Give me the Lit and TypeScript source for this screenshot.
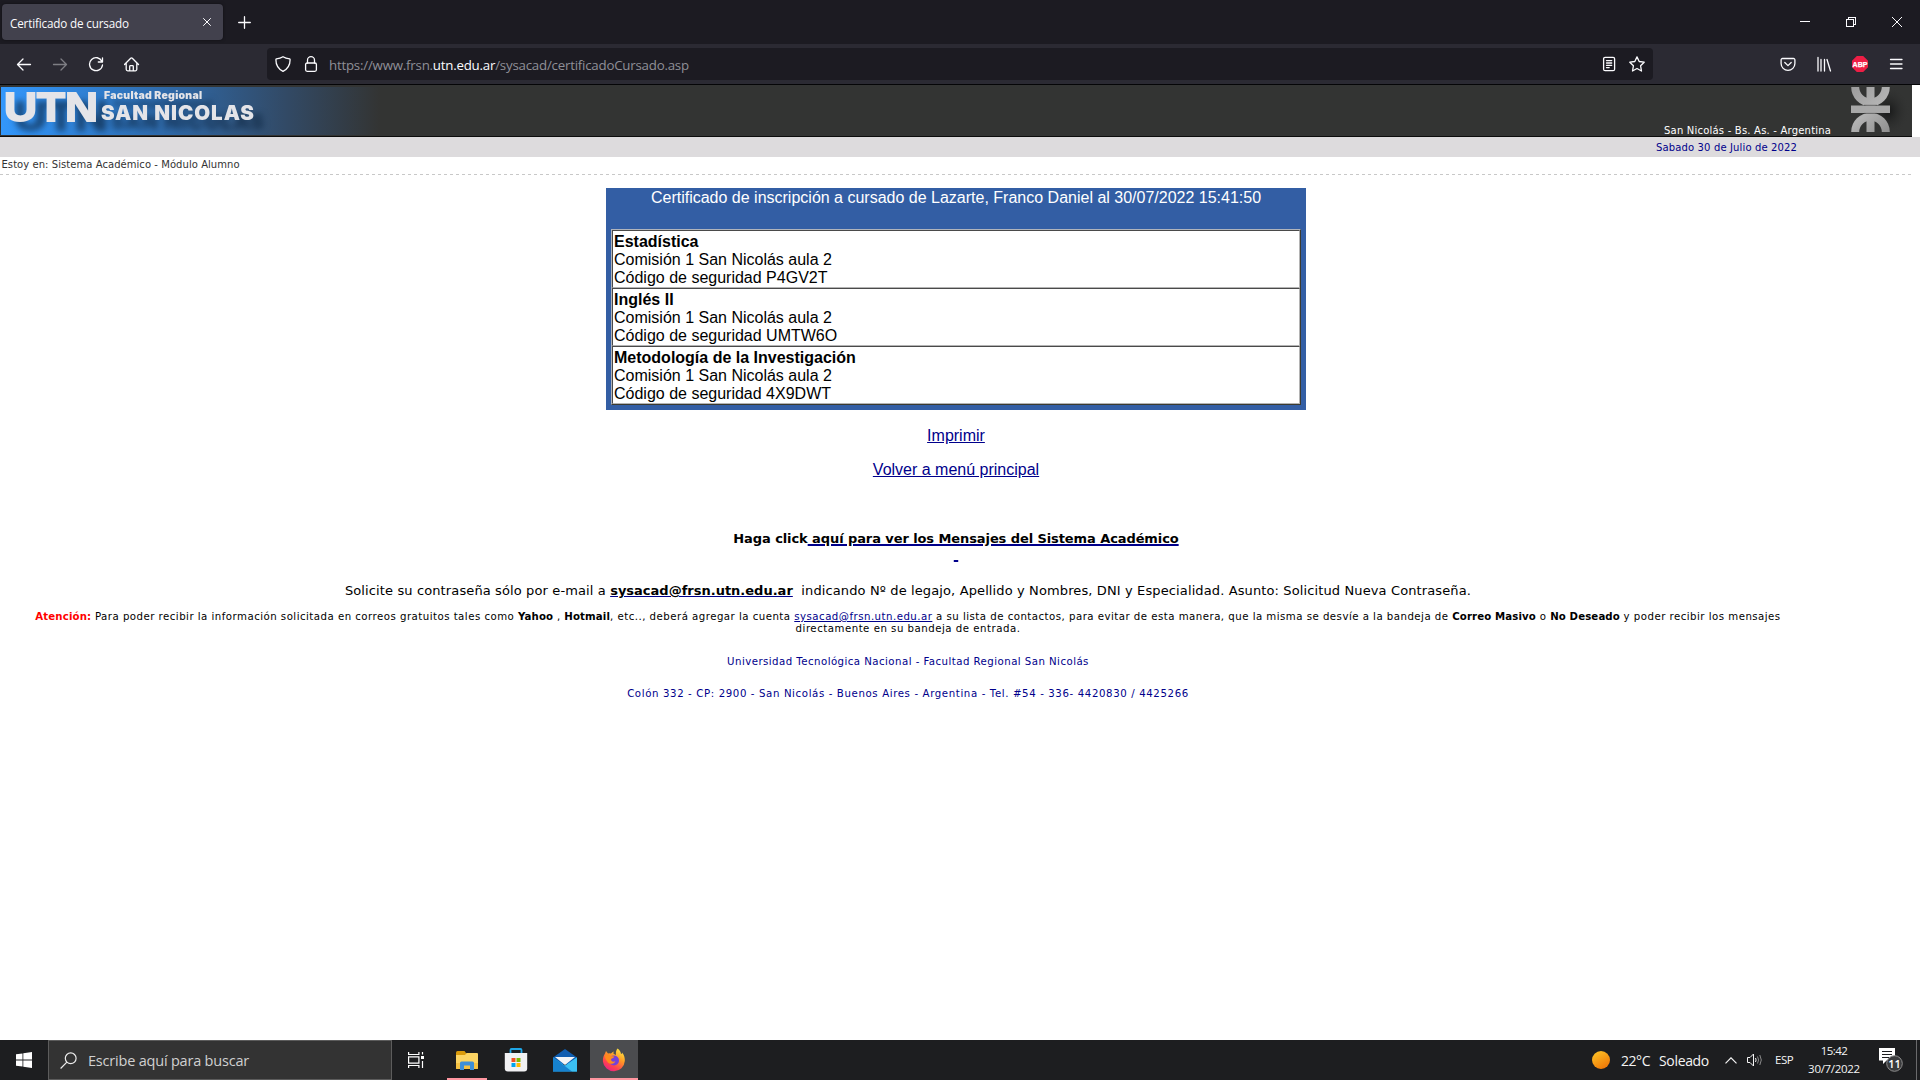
import { LitElement, html, css } from "lit";
import { customElement } from "lit/decorators.js";

const subjects = [
  { name: "Estadística", code: "P4GV2T" },
  { name: "Inglés II", code: "UMTW6O" },
  { name: "Metodología de la Investigación", code: "4X9DWT" },
];

@customElement("browser-chrome")
class BrowserChrome extends LitElement {
  static styles = css`
    :host { display: block; font-family: "Open Sans", "Noto Sans", sans-serif; color: #fbfbfe; }
    svg { display: block; flex: none; fill: none; stroke: #fbfbfe; stroke-width: 1.3; stroke-linecap: round; stroke-linejoin: round; }
    .tabs { height: 44px; background: #1c1b22; display: flex; align-items: center; padding-left: 2px; box-sizing: border-box; }
    .tab { width: 221px; height: 36px; background: #42414d; border-radius: 4px; display: flex; align-items: center; justify-content: space-between; padding: 0 12px 0 8px; box-sizing: border-box; box-shadow: 0 0 3px rgba(0,0,0,.5); }
    .title { font-size: 11.7px; letter-spacing: -.17px; line-height: 18px; white-space: nowrap; padding-top: 1px; }
    .plus { margin-left: 15px; }
    .win { margin-left: auto; display: flex; gap: 36px; padding-right: 18px; }
    .win svg { stroke-width: 1; shape-rendering: crispEdges; }
    .win .smooth { shape-rendering: auto; }
    .nav { height: 41px; background: #2b2a33; border-bottom: 1px solid #050507; display: flex; align-items: center; box-sizing: border-box; padding-left: 16px; }
    .buttons { display: flex; gap: 20px; width: 251px; }
    .dim { opacity: .4; }
    .field { width: 1386px; height: 32px; border-radius: 4px; background: #1c1b22; display: flex; align-items: center; padding: 0 8px; box-sizing: border-box; gap: 12px; }
    .url { font-size: 13.3px; letter-spacing: -.225px; line-height: 20px; color: #8f8f97; margin-left: -2px; white-space: nowrap; flex: 1; padding-top: 2px; }
    .url b { font-weight: 400; color: #fbfbfe; }
    .ext { margin-left: auto; display: flex; gap: 20px; padding-right: 16px; }
    .abp { fill: #fff; stroke: #fff; stroke-width: .25; font: 700 7px "Liberation Sans", sans-serif; }
  `;
  render() {
    return html`
      <div class="tabs">
        <div class="tab"><span class="title">Certificado de cursado</span>
          <svg width="8" height="8" viewBox="0 0 8 8"><path stroke-width="1" d="M.5.5l7 7M7.5.5l-7 7"/></svg></div>
        <svg class="plus" width="13" height="13" viewBox="0 0 13 13"><path d="M6.5.7v11.6M.7 6.5h11.6"/></svg>
        <div class="win">
          <svg width="10" height="10" viewBox="0 0 10 10"><path d="M0 4.5h10"/></svg>
          <svg width="10" height="10" viewBox="0 0 10 10"><path d="M.5 2.5h7v7h-7zM2.5 2.5v-2h7v7h-2"/></svg>
          <svg class="smooth" width="10" height="10" viewBox="0 0 10 10"><path d="M.2.2l9.6 9.6M9.8.2L.2 9.8"/></svg>
        </div>
      </div>
      <div class="nav">
        <div class="buttons">
          <svg width="16" height="16" viewBox="0 0 16 16"><path d="M14.5 8.5H1.5M7 3L1.5 8.5 7 14"/></svg>
          <svg class="dim" width="16" height="16" viewBox="0 0 16 16"><path d="M1.5 8.5h13M9 3l5.5 5.500L9 14"/></svg>
          <svg width="16" height="16" viewBox="0 0 16 16"><path d="M14 5.500A6.500 6.500 0 1 0 14.500 9M14.500 1.800v4.200h-4.200"/></svg>
          <svg width="16" height="16" viewBox="0 0 16 16"><path d="M.5 8.500L6.700 2.200a1.100 1.100 0 0 1 1.600 0L14.500 8.500M2.200 7v6.300a1.500 1.500 0 0 0 1.500 1.500h7.600a1.500 1.500 0 0 0 1.500-1.500V7M5.700 14.500V10.500a.8.800 0 0 1 .8-.8h2a.8.800 0 0 1 .8.800v4"/></svg>
        </div>
        <div class="field">
          <svg width="16" height="16" viewBox="0 0 16 16"><path d="M8 .7C6 2 3.500 2.600 1.400 2.800 1 3 .9 3.300 .9 3.700 .9 9 3 12.800 8 15.300c5-2.500 7.100-6.300 7.100-11.600 0-.4-.1-.7-.5-.9C12.500 2.600 10 2 8 .7z"/></svg>
          <svg width="16" height="16" viewBox="0 0 16 16"><rect x="2.600" y="7" width="10.800" height="8.300" rx="1.500"/><path d="M4.500 7V4.200a3.500 3.500 0 0 1 7 0V7"/></svg>
          <span class="url">https://www.frsn.<b>utn.edu.ar</b>/sysacad/certificadoCursado.asp</span>
          <svg width="16" height="16" viewBox="0 0 16 16"><rect x="2.600" y="1.300" width="11" height="13.400" rx="1.500"/><path d="M5.500 4.600h5.200M5.500 7h5.200M5.500 9.300h5.200M5.500 11.600h2.700"/></svg>
          <svg width="16" height="16" viewBox="0 0 16 16"><path d="M8 .9l2.200 4.600 5 .7-3.600 3.600.9 5.200L8 12.500l-4.500 2.500.9-5.200L.8 6.200l5-.7z"/></svg>
        </div>
        <div class="ext">
          <svg width="16" height="16" viewBox="0 0 16 16"><path d="M2.500 2.500h11a1.400 1.400 0 0 1 1.400 1.400v3.600a6.900 6.900 0 0 1-13.800 0V3.900a1.400 1.400 0 0 1 1.400-1.400zM4.800 6.500L8 9.600l3.200-3.100"/></svg>
          <svg width="16" height="16" viewBox="0 0 16 16"><path d="M2 1.500v13.500M5 3.500v11.500M8.500 3.500v11.500M11 3.500l3.500 11.500"/></svg>
          <svg width="16" height="16" viewBox="0 0 16 16"><path stroke="none" fill="#ed1e45" d="M4.800 0h6.400L16 4.800v6.400L11.200 16H4.800L0 11.200V4.800z"/><text class="abp" x="8" y="10.600" text-anchor="middle">ABP</text></svg>
          <svg width="16" height="16" viewBox="0 0 16 16"><path d="M2.500 3.500h11.500M2.500 8h11.500M2.500 12.500h11.500"/></svg>
        </div>
      </div>`;
  }
}

@customElement("campus-page")
class CampusPage extends LitElement {
  static styles = css`
    :host { display: block; height: 955px; background: #fff; font-family: "DejaVu Sans", sans-serif; color: #000; overflow: hidden; }
    .header { width: 1912px; height: 52px; box-sizing: border-box; background: #333433; border-bottom: 1px solid #0c0c0c; display: flex; }
    .logo { display: block; width: 380px; height: 51px; }
    .letters { filter: drop-shadow(10px 9px 3px rgba(12, 36, 62, .65)); }
    .place { margin-left: auto; align-self: flex-end; color: #fff; font-size: 10px; letter-spacing: .206px; line-height: 11px; white-space: nowrap; width: 167px; }
    .emblem { display: block; margin: 0 0 0 12px; }
    .date { height: 20px; box-sizing: border-box; background: #dddbdd; color: #00008b; font-size: 10px; letter-spacing: .14px; line-height: 20px; padding: 1px 0 0 1656px; white-space: nowrap; }
    .crumb { font-size: 10px; letter-spacing: .056px; line-height: 15px; height: 17px; padding-left: 1.500px; color: #333; }
    .dash { width: 1912px; height: 1px; background: repeating-linear-gradient(90deg, #c8c8c8 0 3px, transparent 3px 6px); }
    .card { width: 700px; height: 222px; box-sizing: border-box; margin: 13px 0 0 606px; background: #335ea4; padding: 0 5px; font: 16px/18px "Liberation Sans", Arial, sans-serif; }
    .cardtitle { height: 41px; box-sizing: border-box; padding-top: 1px; color: #fff; text-align: center; }
    .list { border: 1px solid; border-color: #b0b4bc #3b3a30 #3b3a30 #b0b4bc; }
    .item { border: 1px solid; border-color: #4a4a4a #b4b4b4 #b4b4b4 #4a4a4a; padding: 2px 1px 0; background: #fff; }
    .links { width: 1912px; display: flex; flex-direction: column; align-items: center; gap: 16px; padding-top: 17px; font: 16px/18px "Liberation Sans", Arial, sans-serif; }
    a { color: #00008b; text-decoration: underline; }
    .msg { width: 1912px; text-align: center; font-size: 13px; letter-spacing: -.09px; font-weight: 700; line-height: 17px; padding-top: 51px; }
    .gap { margin-top: -1px; }
    .msg u { text-decoration-color: #00008b; text-decoration-thickness: 2px; }
    .foot { width: 1816px; text-align: center; font-size: 10.2px; line-height: 12px; white-space: nowrap; }
    .ask { font-size: 13px; letter-spacing: .12px; line-height: 16px; padding: 20px 0 12px; }
    .ask u { text-decoration-color: #00008b; font-weight: 700; letter-spacing: 0; }
    .notice { letter-spacing: .475px; }
    .notice b { letter-spacing: .12px; }
    .notice2 { letter-spacing: .5px; }
    .red { color: #f00; }
    .org { color: #00008b; display: flex; flex-direction: column; gap: 20px; padding-top: 21px; }
    .uni { letter-spacing: .454px; }
    .addr { letter-spacing: .616px; }
    .heavy { font-family: "Inter", "Liberation Sans", sans-serif; font-weight: 900; }
    .utn { font-family: "Liberation Sans", sans-serif; font-weight: 700; }
  `;
  render() {
    return html`
      <div class="header">
        <svg class="logo" viewBox="0 85 380 51">
          <defs>
            <linearGradient id="sky"><stop offset="0" stop-color="#3397fb"/><stop offset=".15" stop-color="#3088e2"/><stop offset=".45" stop-color="#2f68a6"/><stop offset=".75" stop-color="#324a66"/><stop offset="1" stop-color="#333433"/></linearGradient>
          </defs>
          <rect x="1" y="87" width="379" height="48" fill="url(#sky)"/>
          <g class="letters" fill="#e4e4e8">
            <text class="utn" x="4" y="120.500" font-size="40" textLength="94" lengthAdjust="spacingAndGlyphs" stroke="#e4e4e8" stroke-width="1.800">UTN</text>
            <text class="heavy" x="104" y="99" font-size="10.500" textLength="98">Facultad Regional</text>
            <text class="heavy" x="101" y="119.500" font-size="20.500" textLength="153">SAN NICOLAS</text>
          </g>
        </svg>
        <div class="place">San Nicolás - Bs. As. - Argentina</div>
        <svg class="emblem" width="69" height="51" viewBox="1843 85 69 51">
          <defs>
            <linearGradient id="steel" gradientUnits="userSpaceOnUse" x1="1851" y1="87" x2="1890" y2="132"><stop offset="0" stop-color="#9c9c9c"/><stop offset=".5" stop-color="#b2b2b2"/><stop offset="1" stop-color="#8e8e8e"/></linearGradient>
            <radialGradient id="shade"><stop offset="0" stop-color="#161717"/><stop offset="1" stop-color="#333433" stop-opacity="0"/></radialGradient>
          </defs>
          <ellipse cx="1888" cy="111" rx="22" ry="25" fill="url(#shade)"/>
          <g fill="none" stroke="url(#steel)" stroke-width="8">
            <path d="M1855.200 87a15.300 15.300 0 0 0 30.600 0M1855.200 132a15.300 15.300 0 0 1 30.600 0"/>
            <path d="M1870.500 87V105.500M1870.500 113V132"/>
          </g>
          <rect x="1851" y="105.500" width="39" height="7.500" fill="#a8a8a8"/>
          <path fill="none" stroke="#4a4a4a" stroke-width=".7" d="M1864 105.300h13M1864 113.400h13"/>
        </svg>
      </div>
      <div class="date">Sabado 30 de Julio de 2022</div>
      <div class="crumb">Estoy en: Sistema Académico - Módulo Alumno</div>
      <div class="dash"></div>
      <div class="card">
        <div class="cardtitle">Certificado de inscripción a cursado de Lazarte, Franco Daniel al 30/07/2022 15:41:50</div>
        <div class="list">
          ${subjects.map((s) => html`<div class="item"><b>${s.name}</b><br>Comisión 1 San Nicolás aula 2<br>Código de seguridad ${s.code}</div>`)}
        </div>
      </div>
      <div class="links"><a>Imprimir</a><a>Volver a menú principal</a></div>
      <div class="msg"><div>Haga click<u>&nbsp;aquí para ver los Mensajes del Sistema Académico</u></div><div class="gap"><u>&nbsp;</u></div></div>
      <div class="foot">
        <div class="ask">Solicite su contraseña sólo por e-mail a <u>sysacad@frsn.utn.edu.ar</u>&nbsp; indicando Nº de legajo, Apellido y Nombres, DNI y Especialidad. Asunto: Solicitud Nueva Contraseña.</div>
        <div class="notice"><b class="red">Atención:</b> Para poder recibir la información solicitada en correos gratuitos tales como <b>Yahoo</b> , <b>Hotmail</b>, etc.., deberá agregar la cuenta <a>sysacad@frsn.utn.edu.ar</a> a su lista de contactos, para evitar de esta manera, que la misma se desvíe a la bandeja de <b>Correo Masivo</b> o <b>No Deseado</b> y poder recibir los mensajes<br><span class="notice2">directamente en su bandeja de entrada.</span></div>
        <div class="org">
          <div class="uni">Universidad Tecnológica Nacional - Facultad Regional San Nicolás</div>
          <div class="addr">Colón 332 - CP: 2900 - San Nicolás - Buenos Aires - Argentina - Tel. #54 - 336- 4420830 / 4425266</div>
        </div>
      </div>`;
  }
}

@customElement("desktop-taskbar")
class DesktopTaskbar extends LitElement {
  static styles = css`
    :host { display: flex; height: 40px; background: #1d1e20; color: #f4f4f4; font-family: "Open Sans", "Noto Sans", sans-serif; white-space: nowrap; }
    svg { display: block; flex: none; }
    .start, .task { width: 48px; display: flex; align-items: center; justify-content: center; }
    .search { width: 344px; box-sizing: border-box; border: 1px solid #5c5c5c; background: #333; display: flex; align-items: center; gap: 11px; padding-left: 11px; font-size: 14.5px; letter-spacing: -.2px; color: #d0d0d0; }
    .app { width: 49px; display: flex; align-items: center; justify-content: center; box-sizing: border-box; }
    .tiles { display: flex; padding-left: 2px; }
    .open { background: linear-gradient(#ff96a0, #ff96a0) center bottom / 40px 2px no-repeat; }
    .active { width: 48px; margin-left: 1px; background: #4b4c4f; border-bottom: 2px solid #ff96a0; padding-top: 2px; }
    .tray { margin-left: auto; display: flex; align-items: center; width: 328px; }
    .wx { font-size: 14px; letter-spacing: -.45px; width: 38px; margin-left: 11px; }
    .sol { font-size: 14px; letter-spacing: -.33px; width: 66px; }
    .speaker { margin-left: 10px; }
    .esp { font-size: 11.5px; letter-spacing: -.5px; width: 33px; margin-left: 11px; padding-bottom: 1px; }
    .clock { font-size: 11.5px; line-height: 18px; text-align: center; width: 52px; letter-spacing: -.3px; padding-bottom: 1px; }
    .time { letter-spacing: -.6px; }
    .note { margin-left: 19px; }
    .edge { width: 1px; height: 40px; background: #6a6a6c; margin-left: 13px; }
  `;
  render() {
    return html`
      <div class="start"><svg width="16" height="16" viewBox="0 0 16 16" fill="#fff"><path d="M0 2.300l6.500-.9v6.200H0zM7.300 1.300L16 0v7.600H7.300zM0 8.400h6.500v6.200L0 13.700zM7.300 8.400H16V16l-8.700-1.300z"/></svg></div>
      <div class="search"><svg width="17" height="17" viewBox="0 0 17 17" fill="none" stroke="#ececec" stroke-width="1.200"><circle cx="10.700" cy="6.300" r="5.400"/><path d="M6.900 10.200L.6 16.500"/></svg><span>Escribe aquí para buscar</span></div>
      <div class="task"><svg width="17" height="16" viewBox="0 0 17 16" fill="none" stroke="#fff" stroke-width="1.200"><path d="M.6 0v2.500h10.300V0M.6 16v-2.500h10.300V16M.6 4.800h10.300v6.400H.6zM14.500 0v2.500M14.500 9v7"/><path fill="#fff" stroke="none" d="M13 4h3v3h-3z"/></svg></div>
      <div class="tiles">
        <div class="app open"><svg width="22" height="19" viewBox="0 0 22 19"><path fill="#d99a0b" d="M0 1.500Q0 0 1.500 0h7l1.500 2v3H0z"/><path fill="#fbd463" d="M0 4h9l1.500-2H21q1 0 1 1v14q0 1-1 1H1q-1 0-1-1z"/><path fill="#f5c243" d="M0 12h22v5q0 1-1 1H1q-1 0-1-1z"/><path fill="#3d8fd8" d="M4 19v-7q0-1.500 1.500-1.500h11Q18 10.500 18 12v7h-4v-4.500H8V19z"/></svg></div>
        <div class="app"><svg width="24" height="24" viewBox="0 0 24 24"><path fill="none" stroke="#1fa7e8" stroke-width="1.800" d="M6.500 6.500V2q0-1 1-1h9q1 0 1 1v4.500"/><path fill="#f1f1f3" d="M.8 5h22.400v15.500q0 3-3 3H3.800q-3 0-3-3z"/><path fill="#f25022" d="M7.500 10h4v4h-4z"/><path fill="#7fba00" d="M12.500 10h4v4h-4z"/><path fill="#00a4ef" d="M7.500 15h4v4h-4z"/><path fill="#ffb900" d="M12.500 15h4v4h-4z"/></svg></div>
        <div class="app"><svg width="24" height="23" viewBox="0 0 24 23"><path fill="#0f5db0" d="M0 8.500L12 0l12 8.500V15H0z"/><path fill="#f2f4f6" d="M2 8h20L12 16z"/><path fill="#2aa5e8" d="M0 8.500l12 8 12-8V22.500H0z"/><path fill="#1682cf" d="M0 8.500L19 22.500H0z"/><path fill="#3bc0f2" d="M24 8.500L12 16.800 19 22.500h5z"/></svg></div>
        <div class="app active"><svg width="24" height="24" viewBox="0 0 24 24"><defs><linearGradient id="fire" x1=".85" y1="0" x2=".25" y2="1"><stop offset="0" stop-color="#fff04a"/><stop offset=".4" stop-color="#ff9a24"/><stop offset=".75" stop-color="#ff4150"/><stop offset="1" stop-color="#e5208a"/></linearGradient></defs>
          <path fill="url(#fire)" d="M15.500.5C18 2.200 18.800 4 19 6c1-.3 1-1 1-1.600 2.400 2.600 3 5.800 2.800 8.600A11 11 0 0 1 .9 13.500C.7 10 1.800 7 3 5.500L4 3l2 2.600q1.800-.5 3 0 1.300-1.800 3-2.200-1 1.500-.5 2.300L14 7c-.5-3 .3-5 1.500-6.500z"/><circle cx="12" cy="12.500" r="5" fill="#7541d8"/><path fill="#ff8a1c" d="M2.800 7.500C5 6 7.500 6.500 8.500 8l3.800.6c-.4 1.600-2.300 1.700-3.300 2.600 0 2.300 2 3 4.400 2-1.500 3.200-6 3.600-8 .5C4 12 3 10 2.800 7.500z"/></svg></div>
      </div>
      <div class="tray">
        <svg width="18" height="18" viewBox="0 0 18 18"><defs><linearGradient id="sun" x1="0" y1="0" x2=".6" y2="1"><stop offset="0" stop-color="#ffc928"/><stop offset="1" stop-color="#f07a08"/></linearGradient></defs><circle cx="9" cy="9" r="9" fill="url(#sun)"/></svg>
        <span class="wx">22°C</span><span class="sol">Soleado</span>
        <svg width="12" height="7" viewBox="0 0 12 7" fill="none" stroke="#f4f4f4" stroke-width="1.200"><path d="M.5 6.300L6 .8l5.500 5.500"/></svg>
        <svg class="speaker" width="17" height="14" viewBox="0 0 17 14" fill="none" stroke="#f4f4f4"><path d="M.5 4.500h2.500L6.500 1v12L3 9.500H.5z"/><path d="M8.500 5q1.200 2 0 4"/><path stroke="#8a8a8a" d="M10.500 3.500q2.200 3.500 0 7M12.800 2q3 5 0 10"/></svg>
        <span class="esp">ESP</span>
        <div class="clock"><span class="time">15:42</span><br>30/7/2022</div>
        <svg class="note" width="24" height="24" viewBox="0 0 24 24"><path fill="#fff" d="M0 0h16v12.500H7.500L4 16v-3.500H0z"/><path stroke="#1d1e20" d="M3 3.500h10M3 6.500h10M3 9.500h7"/><circle cx="15.500" cy="15.500" r="7.800" fill="#3a3b3d" stroke="#8d8d8d"/><text x="15.500" y="19.500" text-anchor="middle" fill="#fff" font-size="11" font-weight="600">11</text></svg>
        <span class="edge"></span>
      </div>`;
  }
}

@customElement("app-root")
class AppRoot extends LitElement {
  static styles = css`:host { display: block; width: 1920px; height: 1080px; overflow: hidden; background: #fff; }`;
  render() {
    return html`<browser-chrome></browser-chrome><campus-page></campus-page><desktop-taskbar></desktop-taskbar>`;
  }
}
